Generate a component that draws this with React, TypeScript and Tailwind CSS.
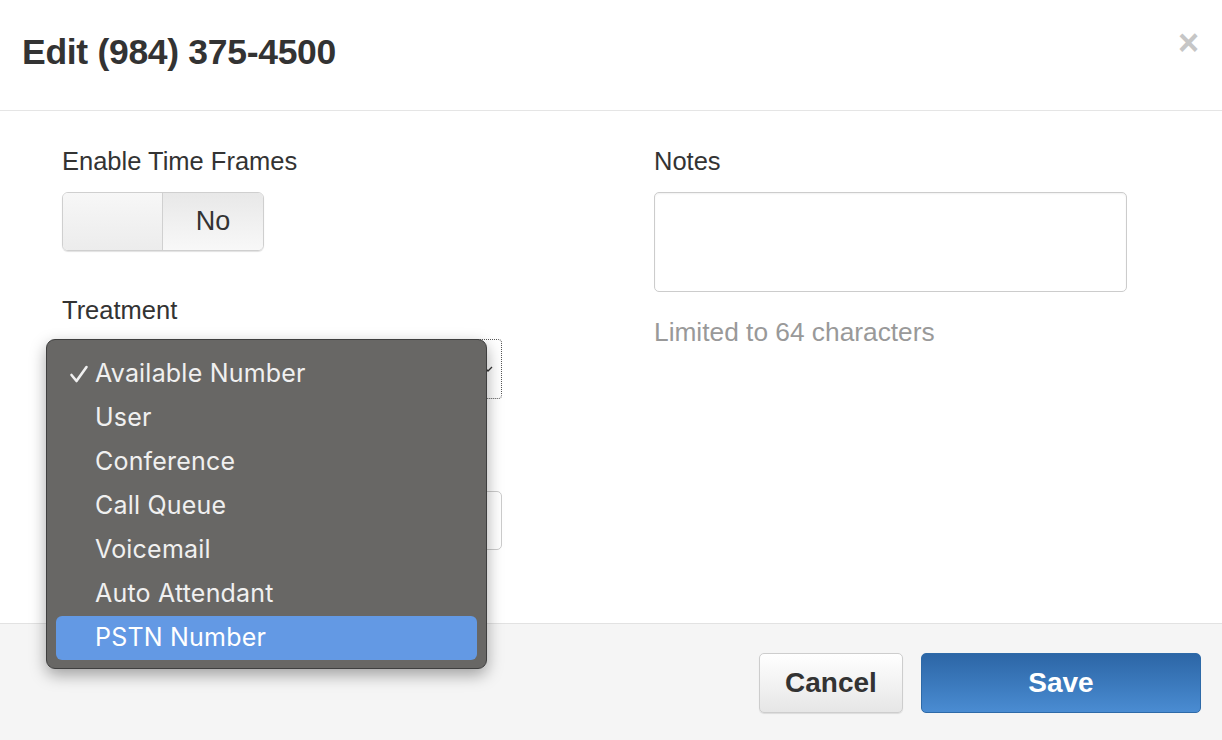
import React from "react";

const items = [
  "Available Number",
  "User",
  "Conference",
  "Call Queue",
  "Voicemail",
  "Auto Attendant",
  "PSTN Number",
];

export default function App() {
  return (
    <div
      className="w-[1222px] h-[740px] bg-white flex flex-col text-[#333] overflow-hidden"
      style={{ fontFamily: '"Liberation Sans", Arial, sans-serif' }}
    >
      {/* Header */}
      <div className="h-[111px] shrink-0 border-b border-[#e5e5e5] flex items-start justify-between pl-[22px] pr-[22px] pt-[29px]">
        <h1 className="text-[35.5px] leading-[46px] font-bold text-[#333] tracking-[-0.3px]">
          Edit (984) 375-4500
        </h1>
        <span className="text-[#c6c6c6] text-[36px] font-bold leading-[36px] mt-[-4px] mr-[1px]">
          ×
        </span>
      </div>

      {/* Body */}
      <div className="flex-1 relative pl-[62px] pt-[34px]">
        <div className="grid grid-cols-[440px_473px] gap-x-[152px]">
          {/* Left column */}
          <div className="flex flex-col">
            <label className="text-[25.5px] leading-[32px] text-[#333]">Enable Time Frames</label>
            <div className="mt-[15px] w-[202px] h-[59px] rounded-[6px] border border-[#cfcfcf] shadow-[0_1px_1px_rgba(0,0,0,0.12)] flex overflow-hidden">
              <div className="w-[100px] h-full bg-gradient-to-b from-[#f7f7f7] to-[#ececec] border-r border-[#d0d0d0]" />
              <div className="flex-1 h-full bg-gradient-to-b from-[#e8e8e8] to-[#f8f8f8] flex items-center justify-center text-[27px] text-[#333]">
                No
              </div>
            </div>
            <label className="mt-[43px] text-[25.5px] leading-[32px] text-[#333]">Treatment</label>
            <div className="mt-[13px] w-[440px] h-[60px] rounded-[4px] border border-dotted border-[#555] bg-white flex items-center justify-end pr-[8px]">
              <svg width="10" height="8" viewBox="0 0 10 8">
                <path d="M1 2 L5 6 L9 2" stroke="#333" strokeWidth="1.3" fill="none" />
              </svg>
            </div>
            <div className="mt-[92px] w-[440px] h-[59px] rounded-[5px] border border-[#cccccc] bg-white" />
          </div>

          {/* Right column */}
          <div className="flex flex-col">
            <label className="text-[25.5px] leading-[32px] text-[#333]">Notes</label>
            <div className="mt-[15px] w-[473px] h-[100px] rounded-[5px] border border-[#cccccc] bg-white shadow-[inset_0_1px_2px_rgba(0,0,0,0.06)]" />
            <p className="mt-[24px] text-[26.3px] leading-[32px] text-[#999]">Limited to 64 characters</p>
          </div>
        </div>

        {/* Dropdown popup */}
        <div
          className="absolute left-[46px] top-[228px] w-[441px] h-[330px] rounded-[9px] bg-[#686765] border border-[#3f3f3f] shadow-[0_6px_16px_rgba(0,0,0,0.35)] px-[9px] pt-[12px] z-10"
          style={{ fontFamily: 'Inter, "Noto Sans", sans-serif' }}
        >
          {items.map((it, i) => {
            const sel = i === items.length - 1;
            return (
              <div
                key={it}
                className={
                  "h-[44px] rounded-[6px] flex items-center text-[25px] tracking-[0.2px] " +
                  (sel ? "bg-[#6399e4] text-white" : "text-[#f0f0f0]")
                }
              >
                <span className="w-[39px] flex justify-end pr-[6px]">
                  {i === 0 ? (
                    <svg width="20" height="20" viewBox="0 0 20 20">
                      <path d="M2.5 11 L7.5 17 L17.5 3" stroke="#f0f0f0" strokeWidth="2.6" fill="none" strokeLinecap="round" strokeLinejoin="round" />
                    </svg>
                  ) : null}
                </span>
                <span>{it}</span>
              </div>
            );
          })}
        </div>
      </div>

      {/* Footer */}
      <div className="h-[117px] shrink-0 bg-[#f5f5f5] border-t border-[#e2e2e2] flex justify-end items-start pt-[29px] pr-[21px] gap-[18px]">
        <button className="w-[144px] h-[60px] rounded-[5px] border border-[#cdcdcd] bg-gradient-to-b from-white to-[#e6e6e6] shadow-[0_1px_1px_rgba(0,0,0,0.1)] text-[28px] font-bold text-[#333]">
          Cancel
        </button>
        <button className="w-[280px] h-[60px] rounded-[5px] border border-[#2e6aa8] bg-gradient-to-b from-[#2c66a6] to-[#4a8cd2] text-[28px] font-bold text-white">
          Save
        </button>
      </div>
    </div>
  );
}
